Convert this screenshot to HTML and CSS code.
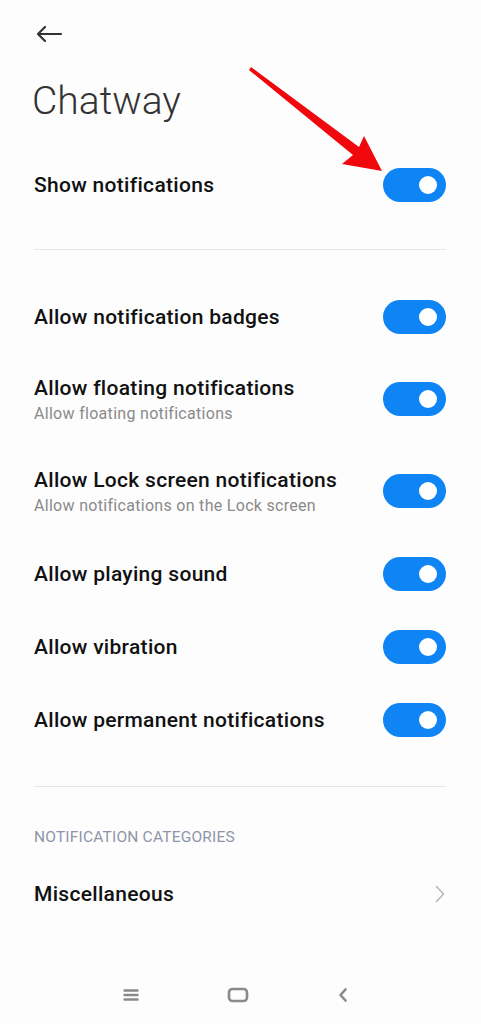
FILE: index.html
```html
<!DOCTYPE html>
<html lang="en">
<head>
    <meta charset="UTF-8">
    <meta name="viewport" content="width=device-width,user-scalable=no">
    <title>Chatway</title>
    <link rel="stylesheet" href="styles.css">
</head>
<body>

<div class="page">
    <header class="top">
        <svg class="back" width="28" height="18" viewBox="0 0 28 18">
            <path d="M26 9H3M10 2L3 9l7 7" fill="none" stroke="#333" stroke-width="2.2" stroke-linecap="round" stroke-linejoin="round"/>
        </svg>
        <h1 class="title">Chatway</h1>
    </header>

    <div class="row row-main">
        <div class="text"><div class="label">Show notifications</div></div>
        <span class="toggle"></span>
    </div>

    <hr class="divider first">

    <section class="list">
        <div class="row">
            <div class="text"><div class="label">Allow notification badges</div></div>
            <span class="toggle"></span>
        </div>
        <div class="row row-two">
            <div class="text">
                <div class="label">Allow floating notifications</div>
                <div class="sub">Allow floating notifications</div>
            </div>
            <span class="toggle"></span>
        </div>
        <div class="row row-two">
            <div class="text">
                <div class="label">Allow Lock screen notifications</div>
                <div class="sub">Allow notifications on the Lock screen</div>
            </div>
            <span class="toggle"></span>
        </div>
        <div class="row">
            <div class="text"><div class="label">Allow playing sound</div></div>
            <span class="toggle"></span>
        </div>
        <div class="row">
            <div class="text"><div class="label">Allow vibration</div></div>
            <span class="toggle"></span>
        </div>
        <div class="row">
            <div class="text"><div class="label">Allow permanent notifications</div></div>
            <span class="toggle"></span>
        </div>
    </section>

    <hr class="divider second">

    <div class="category">NOTIFICATION CATEGORIES</div>

    <div class="row row-link">
        <div class="text"><div class="label">Miscellaneous</div></div>
        <svg class="chevron" width="10" height="18" viewBox="0 0 10 18">
            <path d="M1.5 1.5L8.5 9l-7 7.5" fill="none" stroke="#b8b8b8" stroke-width="1.6" stroke-linecap="round" stroke-linejoin="round"/>
        </svg>
    </div>
</div>

<nav class="navbar">
    <svg width="16" height="14" viewBox="0 0 16 14">
        <path d="M1.5 2.5h13M1.5 7h13M1.5 11.5h13" stroke="#8a8a8a" stroke-width="2.4" stroke-linecap="round"/>
    </svg>
    <svg width="22" height="16" viewBox="0 0 22 16">
        <rect x="2" y="2" width="18" height="12" rx="3.5" fill="none" stroke="#8a8a8a" stroke-width="2.6"/>
    </svg>
    <svg width="12" height="16" viewBox="0 0 12 16">
        <path d="M8.5 2.5L3.5 8l5 5.5" fill="none" stroke="#8a8a8a" stroke-width="2.6" stroke-linecap="round" stroke-linejoin="round"/>
    </svg>
</nav>

<!-- red pointer drawn over the screenshot -->
<svg class="pointer" width="481" height="200" viewBox="0 0 481 200">
    <polygon points="251,67 359,147 364,136 382,171 342,164 353,155 249,70" fill="#f0080c"/>
</svg>

</body>
</html>
```

FILE: styles.css
```css
*{
    margin:0;
    padding:0;
    box-sizing:border-box;
}

body {
    width:481px;
    height:1024px;
    background:#fdfdfd;
    font-family:Roboto,"Noto Sans",sans-serif;
    color:#111;
    position:relative;
    overflow:hidden;
}
.page {
    padding:0 35px 0 34px;
}
.top {
    padding-top:25px;
}
.back {
    display:block;
    margin-left:1px;
}
.title {
    font-weight:300;
    font-size:39px;
    color:#333;
    line-height:46px;
    margin-top:35px;
    margin-left:-2px;
}

.row {
    display:flex;
    align-items:center;
    justify-content:space-between;
    height:73px;
}
.row-main {
    margin-top:24px;
}
.row-two {
    height:92px;
}
.label {
    font-size:21px;
    font-weight:500;
    letter-spacing:0.3px;
    line-height:26px;
    color:#111;
}
.sub {
    font-size:16px;
    letter-spacing:0.3px;
    line-height:20px;
    color:#8a8a8a;
    margin-top:3px;
}
.toggle {
    position:relative;
    flex:none;
    width:63px;
    height:34px;
    border-radius:17px;
    background:#0f84f4;
}
.toggle::after {
    content:"";
    position:absolute;
    right:9px;
    top:8px;
    width:18px;
    height:18px;
    border-radius:50%;
    background:#fff;
}

.divider {
    border:0;
    border-top:1px solid #e6e6e6;
}
.divider.first {
    margin-top:28px;
    margin-bottom:30px;
}
.divider.second {
    margin-top:30px;
}
.category {
    margin-top:41px;
    font-size:15.5px;
    letter-spacing:0.2px;
    color:#8d95a8;
    line-height:18px;
}
.row-link {
    margin-top:11px;
}
.chevron {
    margin-right:1px;
}

.navbar {
    position:absolute;
    left:0;
    right:0;
    bottom:21px;
    display:flex;
    justify-content:center;
    align-items:center;
    gap:88px;
}
.navbar svg:first-child {
    margin-left:-9px;
}
.pointer {
    position:absolute;
    left:0;
    top:0;
}
```
